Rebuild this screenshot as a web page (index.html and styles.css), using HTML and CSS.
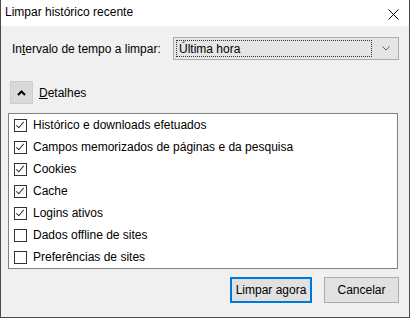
FILE: index.html
```html
<!DOCTYPE html>
<html lang="pt">
<head>
    <meta charset="UTF-8">
    <meta name="viewport" content="width=device-width, initial-scale=1.0">
    <title>Limpar histórico recente</title>
    <link rel="stylesheet" href="styles.css">
</head>
<body>
    <div class="window">
        <div class="titlebar">
            <span class="title">Limpar histórico recente</span>
            <span class="close">
                <svg width="11" height="11" viewBox="0 0 11 11">
                    <path d="M0.5 0.5 L10.5 10.5 M10.5 0.5 L0.5 10.5" stroke="#000" stroke-width="1" fill="none"/>
                </svg>
            </span>
        </div>

        <div class="content">
            <div class="range-row">
                <label class="range-label">In<u>t</u>ervalo de tempo a limpar:</label>
                <div class="select">
                    <div class="select-focus">Última hora</div>
                    <svg class="select-arrow" width="8" height="5" viewBox="0 0 8 5">
                        <path d="M0.5 0.5 L4 4 L7.5 0.5" stroke="#606060" stroke-width="1" fill="none"/>
                    </svg>
                </div>
            </div>

            <div class="details-row">
                <button class="details-toggle">
                    <svg width="9" height="6" viewBox="0 0 9 6">
                        <path d="M1 5 L4.5 1.5 L8 5" stroke="#000" stroke-width="2" fill="none"/>
                    </svg>
                </button>
                <span class="details-label"><u>D</u>etalhes</span>
            </div>

            <!-- itens a limpar -->
            <div class="item-list">
                <div class="item"><span class="check on"></span>Histórico e downloads efetuados</div>
                <div class="item"><span class="check on"></span>Campos memorizados de páginas e da pesquisa</div>
                <div class="item"><span class="check on"></span>Cookies</div>
                <div class="item"><span class="check on"></span>Cache</div>
                <div class="item"><span class="check on"></span>Logins ativos</div>
                <div class="item"><span class="check"></span>Dados offline de sites</div>
                <div class="item"><span class="check"></span>Preferências de sites</div>
            </div>

            <div class="buttons">
                <button class="btn btn-default">Limpar agora</button>
                <button class="btn">Cancelar</button>
            </div>
        </div>
    </div>
</body>
</html>
```

FILE: styles.css
```css
/* Janela estilo Windows 10 */
body {
    margin: 0;
    font-family: "Liberation Sans", Arial, sans-serif;
    font-size: 12px;
    color: #000;
    background: #f0f0f0;
}

.window {
    width: 410px;
    height: 318px;
    box-sizing: border-box;
    border: 1px solid #4a4a4a;
    border-top: none;
    background: #f0f0f0;
    display: flex;
    flex-direction: column;
}

.titlebar {
    height: 26px;
    background: #fff;
    display: flex;
    align-items: center;
    justify-content: space-between;
    padding-left: 4px;
    padding-right: 10px;
    padding-bottom: 2px;
    box-sizing: border-box;
}

.title {
    font-size: 12px;
}

.close {
    display: flex;
    margin-top: 4px;
}

.content {
    flex: 1;
    display: flex;
    flex-direction: column;
    padding: 11px 10px 0 7px;
}

.range-row {
    display: flex;
    align-items: center;
    justify-content: space-between;
    padding-left: 4px;
}

.select {
    width: 226px;
    height: 23px;
    box-sizing: border-box;
    background: #e5e5e5;
    border: 1px solid #acacac;
    display: flex;
    align-items: center;
    padding: 2px;
}

.select-focus {
    flex: 1;
    height: 100%;
    box-sizing: border-box;
    border: 1px dotted #333;
    display: flex;
    align-items: center;
    padding-left: 2px;
}

.select-arrow {
    margin: 0 6px 0 10px;
}

.details-row {
    display: flex;
    align-items: center;
    margin-top: 21px;
    padding-left: 2px;
}

.details-toggle {
    width: 23px;
    height: 23px;
    padding: 0;
    background: #d9d9d9;
    border: 1px solid #cdcdcd;
    display: flex;
    align-items: center;
    justify-content: center;
}

.details-label {
    margin-left: 6px;
}

.item-list {
    margin-top: 9px;
    height: 156px;
    box-sizing: border-box;
    background: #fff;
    border: 1px solid #828282;
    margin-right: 1px;
}

.item {
    height: 22px;
    display: flex;
    align-items: center;
    padding-left: 5px;
}

.check {
    width: 13px;
    height: 13px;
    box-sizing: border-box;
    border: 1px solid #333;
    background: #fff;
    margin-right: 6px;
    position: relative;
}

.check.on::after {
    content: "";
    position: absolute;
    left: 3px;
    top: 0px;
    width: 3px;
    height: 7px;
    border-right: 1px solid #333;
    border-bottom: 1px solid #333;
    transform: rotate(40deg);
}

.buttons {
    display: flex;
    justify-content: flex-end;
    gap: 12px;
    margin-top: 8px;
}

.btn {
    height: 26px;
    min-width: 75px;
    padding: 0 4px;
    font-family: inherit;
    font-size: 12px;
    white-space: nowrap;
    background: #e1e1e1;
    border: 1px solid #adadad;
}

.btn-default {
    width: 82px;
    padding: 0;
    border: 2px solid #0078d7;
}
```
